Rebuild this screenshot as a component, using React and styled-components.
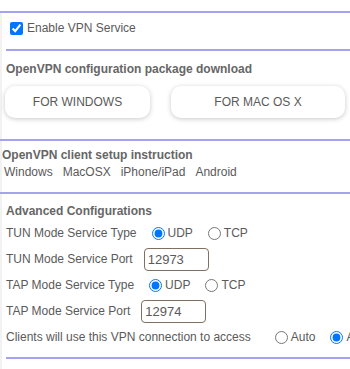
import styled, { createGlobalStyle } from "styled-components";

const GlobalStyle = createGlobalStyle`
  html, body {
    margin: 0;
    padding: 0;
    background: #fff;
    overflow: hidden;
  }
  body {
    font-family: "Liberation Sans", Arial, sans-serif;
    font-size: 12px;
    color: #5a5a5a;
  }
`;

const Page = styled.div`
  width: 350px;
  min-height: 369px;
  box-sizing: border-box;
  border-left: 2px solid #f2f2f2;
  white-space: nowrap;
`;

const Rule = styled.div`
  height: 2px;
  background: #a3a3f0;
  margin-top: ${(p) => p.$top || 0}px;
  margin-left: ${(p) => (p.$full ? -2 : p.$inset || 0)}px;
`;

const EnableRow = styled.label`
  display: flex;
  align-items: center;
  padding: 9px 0 14px 8px;
  line-height: 13px;
`;

const CheckBox = styled.input`
  width: 13px;
  height: 13px;
  margin: 0 4px 0 0;
`;

const Heading = styled.div`
  font-weight: bold;
  color: #666;
  line-height: 16px;
  margin-top: ${(p) => p.$top}px;
  padding-left: ${(p) => p.$indent}px;
`;

const ButtonRow = styled.div`
  display: flex;
  gap: 21px;
  margin-top: 9px;
  padding-left: 3px;
`;

const DownloadButton = styled.button`
  width: ${(p) => p.$width}px;
  height: 32px;
  border: none;
  border-radius: 10px;
  background: #fff;
  box-shadow: 0 1px 5px rgba(0, 0, 0, 0.22);
  font-family: "Liberation Sans", Arial, sans-serif;
  font-size: 12px;
  color: #5a5a5a;
  cursor: pointer;
`;

const Links = styled.div`
  display: flex;
  gap: 10px;
  margin-top: 1px;
  padding-left: 2px;
  line-height: 16px;
`;

const GuideLink = styled.a`
  color: #5a5a5a;
  text-decoration: none;
  cursor: pointer;
`;

const Form = styled.div`
  margin-top: 1px;
  padding-left: 4px;
`;

const Row = styled.div`
  display: flex;
  align-items: center;
  height: 26px;
`;

const Label = styled.span`
  margin-right: ${(p) => p.$gap || 11}px;
`;

const RadioOption = styled.label`
  display: inline-flex;
  align-items: center;
  margin-left: ${(p) => (p.$first ? 4 : 15)}px;
`;

const Radio = styled.input`
  width: 13px;
  height: 13px;
  margin: 0 3px 0 0;
`;

const PortInput = styled.input`
  width: 65px;
  height: 23px;
  box-sizing: border-box;
  border: 1px solid #7f7062;
  border-radius: 4px;
  padding: 0 3px;
  font-family: "Liberation Sans", Arial, sans-serif;
  font-size: 13px;
  color: #5a5a5a;
`;

const RadioGroup = ({ name, options, value }) => (
  <>
    {options.map((opt, i) => (
      <RadioOption key={opt} $first={i === 0}>
        <Radio type="radio" name={name} defaultChecked={opt === value} />
        {opt}
      </RadioOption>
    ))}
  </>
);

const App = () => {
  const guides = ["Windows", "MacOSX", "iPhone/iPad", "Android"];

  return (
    <Page>
      <GlobalStyle />
      <Rule $top={11} $full />
      <EnableRow>
        <CheckBox type="checkbox" defaultChecked />
        Enable VPN Service
      </EnableRow>
      <Rule $inset={4} />

      <Heading $top={10} $indent={4}>
        OpenVPN configuration package download
      </Heading>
      <ButtonRow>
        <DownloadButton $width={145}>FOR WINDOWS</DownloadButton>
        <DownloadButton $width={174}>FOR MAC OS X</DownloadButton>
      </ButtonRow>
      <Rule $top={21} $full />

      <Heading $top={6} $indent={0}>
        OpenVPN client setup instruction
      </Heading>
      <Links>
        {guides.map((g) => (
          <GuideLink key={g}>{g}</GuideLink>
        ))}
      </Links>
      <Rule $top={12} $full />

      <Heading $top={9} $indent={4}>
        Advanced Configurations
      </Heading>
      <Form>
        <Row>
          <Label>TUN Mode Service Type</Label>
          <RadioGroup name="tun" options={["UDP", "TCP"]} value="UDP" />
        </Row>
        <Row>
          <Label>TUN Mode Service Port</Label>
          <PortInput defaultValue="12973" />
        </Row>
        <Row>
          <Label>TAP Mode Service Type</Label>
          <RadioGroup name="tap" options={["UDP", "TCP"]} value="UDP" />
        </Row>
        <Row>
          <Label>TAP Mode Service Port</Label>
          <PortInput defaultValue="12974" />
        </Row>
        <Row>
          <Label $gap={20}>Clients will use this VPN connection to access</Label>
          <RadioGroup name="access" options={["Auto", "All"]} value="All" />
        </Row>
      </Form>
      <Rule $top={7} $inset={4} />
    </Page>
  );
};

export default App;
